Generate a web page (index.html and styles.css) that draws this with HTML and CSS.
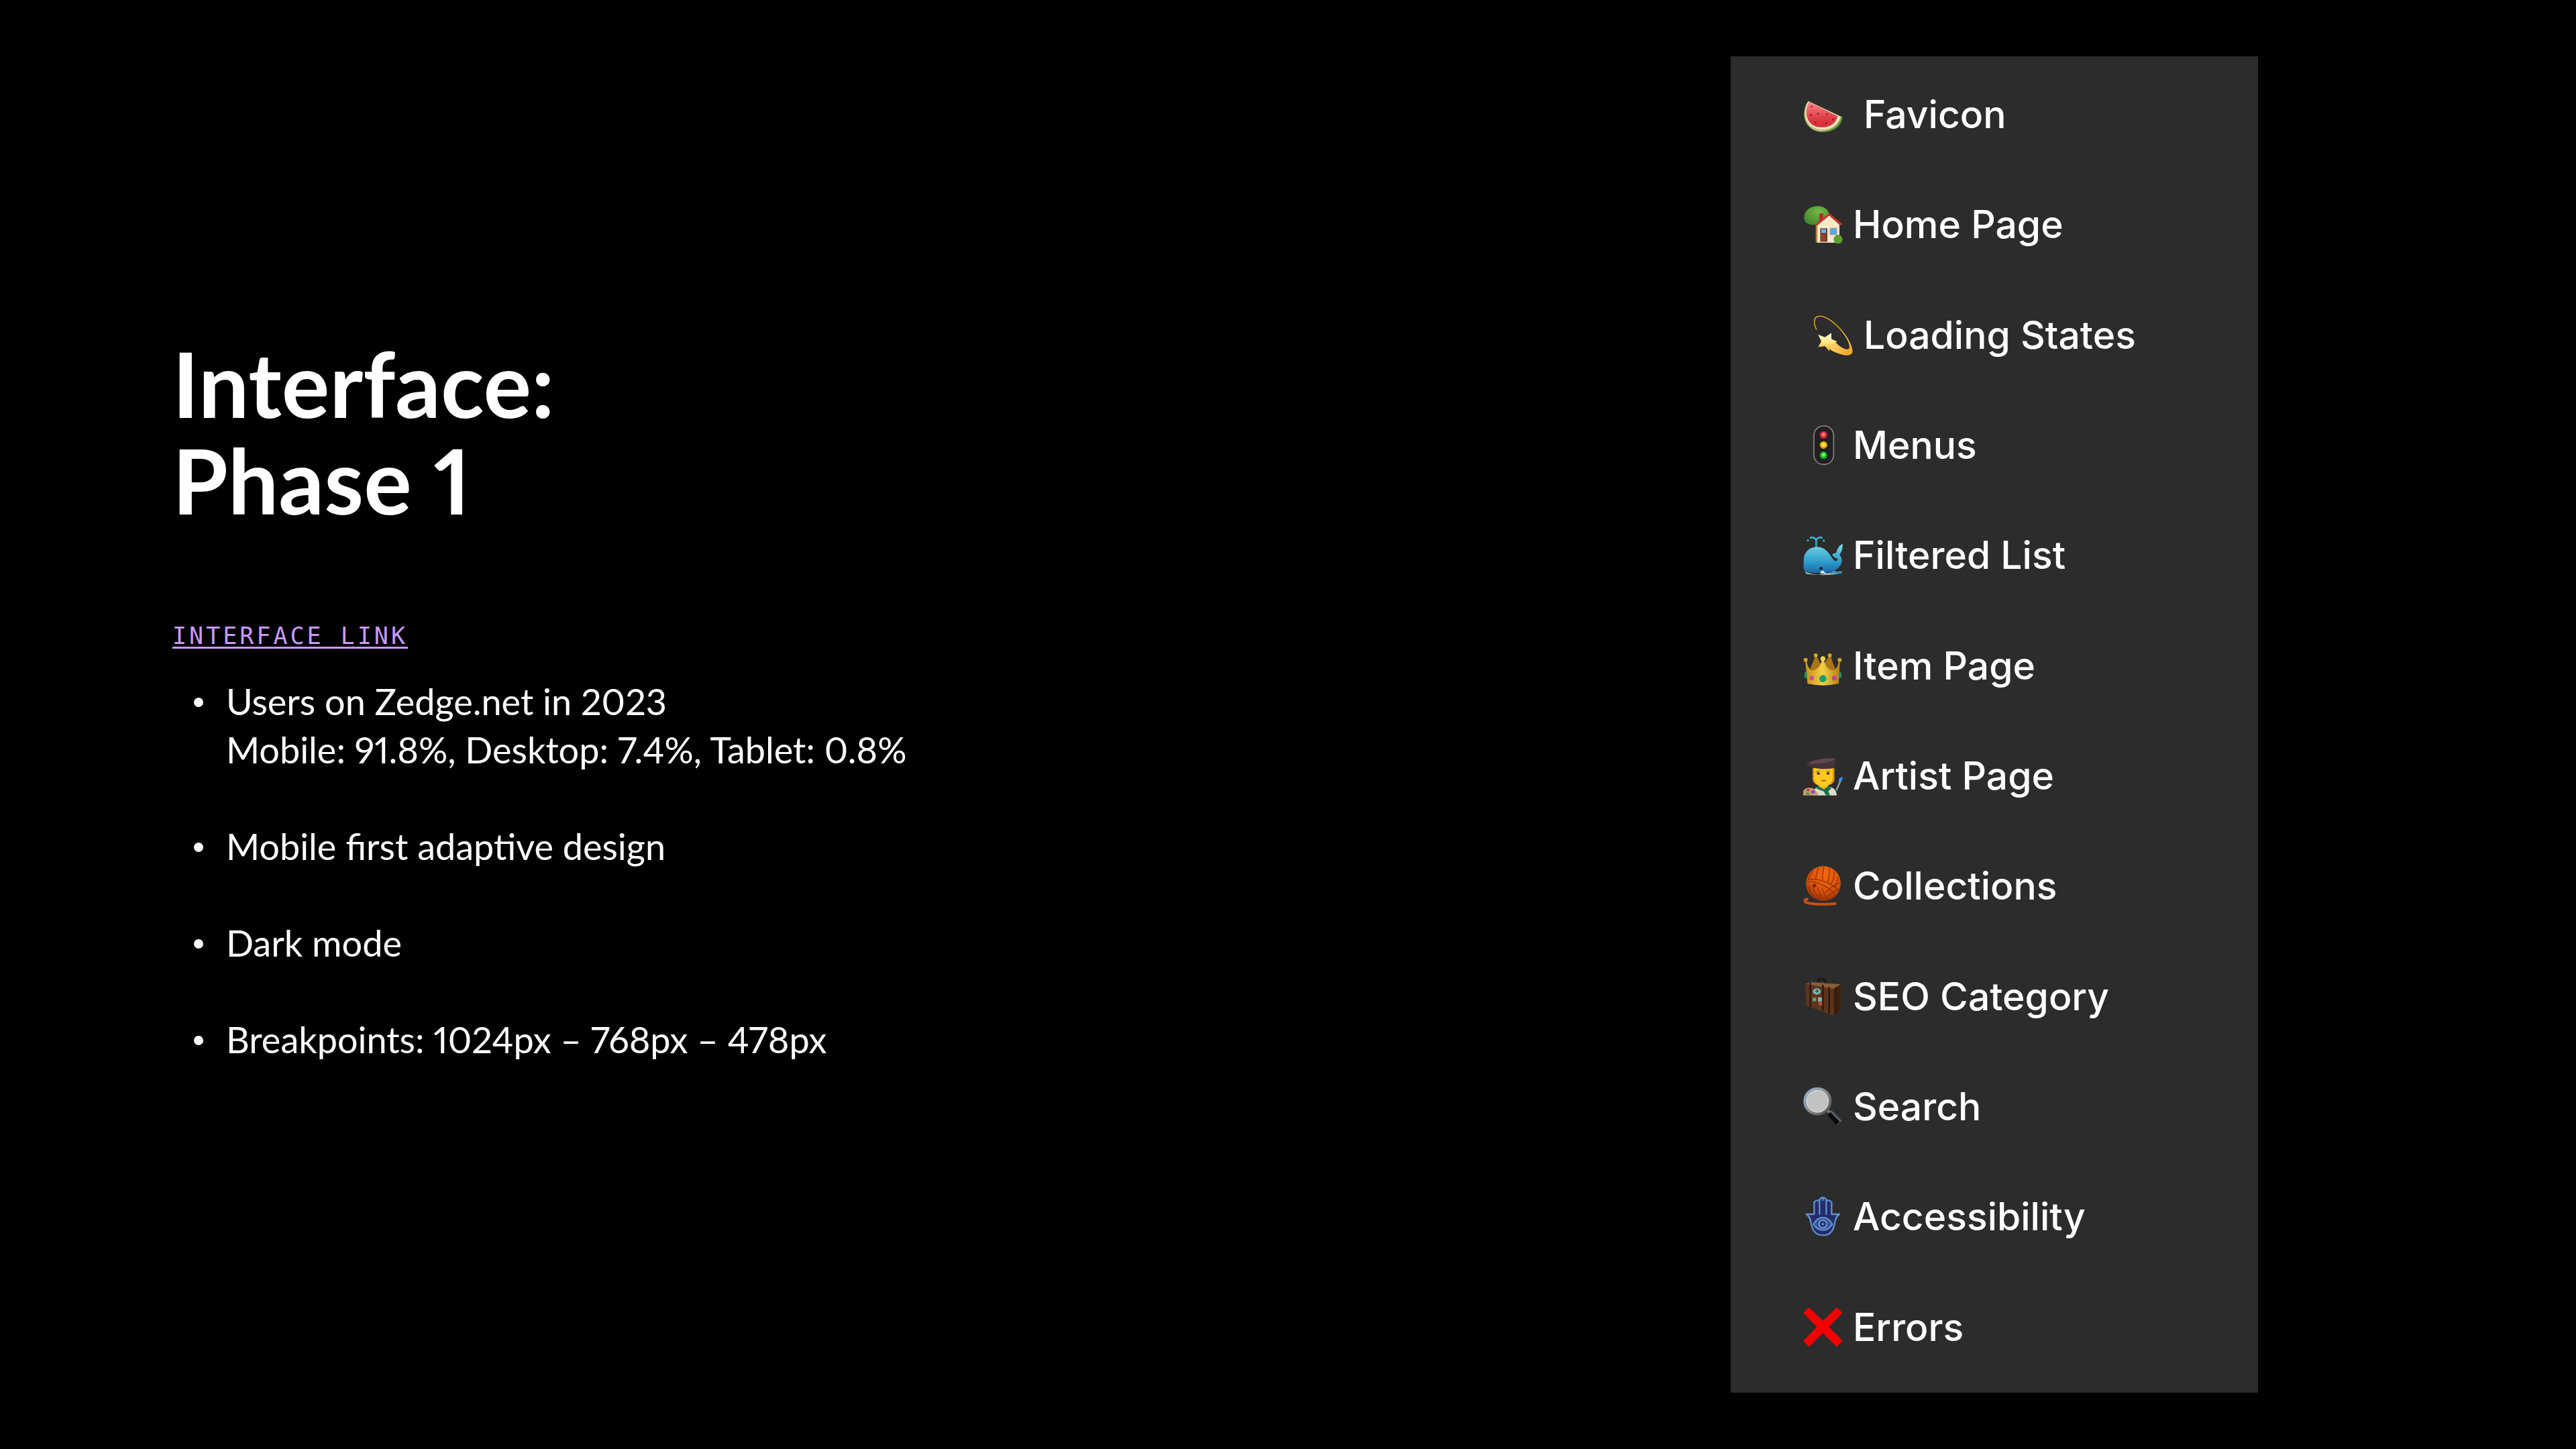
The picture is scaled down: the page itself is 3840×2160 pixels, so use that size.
FILE: index.html
```html
<!DOCTYPE html>
<html lang="en">
<head>
  <meta charset="utf-8">
  <title>Interface: Phase 1</title>
  <link rel="stylesheet" href="styles.css">
</head>
<body>
  <main class="slide">
    <section class="intro">
      <h1 class="title">Interface:<br>Phase 1</h1>
      <a class="link" href="#pages">INTERFACE LINK</a>
      <ul class="facts">
        <li>Users on Zedge.net in 2023<br>Mobile: 91.8%, Desktop: 7.4%, Tablet: 0.8%</li>
        <li>Mobile first adaptive design</li>
        <li>Dark mode</li>
        <li>Breakpoints: 1024px – 768px – 478px</li>
      </ul>
    </section>

    <ul class="pages" id="pages">
      <li class="page page-spaced">
        <svg class="icon" viewBox="0 0 180 180" aria-hidden="true">
          <defs>
            <linearGradient id="melon" x1="0" y1="0" x2="0" y2="1"><stop offset="0" stop-color="#f88a8a"/><stop offset=".6" stop-color="#e2404a"/><stop offset="1" stop-color="#d62c36"/></linearGradient>
          </defs>
          <path d="M22 29C-8 72-4 146 66 165c54 11 106-14 110-67l-10-2z" fill="#5c8f2e"/>
          <path d="M22 29C-8 72-4 146 66 165c50 4 96-22 104-66z" fill="#a9bf78"/>
          <path d="M23 30C-2 74 4 142 66 155c48 8 92-14 100-56z" fill="#f5e3c0"/>
          <path d="M26 32C2 78 14 136 68 145c44 7 78-12 86-48z" fill="url(#melon)"/>
          <g fill="#7c2028"><circle cx="38" cy="54" r="4"/><circle cx="34" cy="92" r="4"/><circle cx="66" cy="86" r="4"/><circle cx="106" cy="89" r="4"/><circle cx="56" cy="125" r="4"/><circle cx="103" cy="127" r="4"/><circle cx="134" cy="112" r="4"/></g>
        </svg>
        <span>Favicon</span>
      </li>
      <li class="page">
        <svg class="icon" viewBox="0 0 180 180" aria-hidden="true">
          <defs>
            <radialGradient id="tree" cx=".6" cy=".3" r=".7"><stop offset="0" stop-color="#74b944"/><stop offset="1" stop-color="#458a2c"/></radialGradient>
          </defs>
          <path d="M4 56C4 26 34 6 66 7c28 1 48 16 52 40L62 86C40 98 2 86 4 56z" fill="url(#tree)"/>
          <path d="M72 40h18v32H72z" fill="#b32a27"/>
          <path d="M56 84h14v86H56z" fill="#b08a4c"/>
          <path d="M116 48l46 42v80H64V92z" fill="#fbe9c8"/>
          <path d="M58 91l58-47 56 46" fill="none" stroke="#cf2f33" stroke-width="9"/>
          <path d="M76 106h32v60H76z" fill="#71382a"/>
          <path d="M81 110h21v17H81z" fill="#62b8e8"/>
          <path d="M78 134h24v28H78z" fill="#8b452e"/>
          <path d="M118 103h34v34h-34z" fill="#c9b08a"/>
          <path d="M121 107h28v27h-28z" fill="#57a8e8"/>
          <circle cx="156" cy="155" r="20" fill="#5c9f30"/>
        </svg>
        <span>Home Page</span>
      </li>
      <li class="page page-indented">
        <svg class="icon" viewBox="0 0 180 180" aria-hidden="true">
          <defs>
            <linearGradient id="star" x1="0" y1="0" x2="0" y2="1"><stop offset="0" stop-color="#fffbe0"/><stop offset=".5" stop-color="#ffe98a"/><stop offset="1" stop-color="#f3ad12"/></linearGradient>
            <linearGradient id="trail" x1="0" y1="0" x2="1" y2="1"><stop offset="0" stop-color="#fff0a0"/><stop offset="1" stop-color="#f0a018"/></linearGradient>
          </defs>
          <path d="M12 64C-2 42-4 6 22 4c36-4 90 44 122 92 14 22 24 48 22 62" fill="none" stroke="#d99f25" stroke-width="5"/>
          <path d="M120 62c30 36 56 78 52 104-4 14-26 16-46 10-32-8-54-20-64-34l30-28c16 22 40 38 58 38 20 0 4-46-30-90z" fill="url(#trail)"/>
          <path d="M78 79v27l26 12-26 12-10 30-18-22-31 4 14-26-14-30 30 12z" fill="url(#star)"/>
        </svg>
        <span>Loading States</span>
      </li>
      <li class="page">
        <svg class="icon" viewBox="0 0 180 180" aria-hidden="true">
          <rect x="48" y="3" width="88" height="172" rx="42" fill="#202020" stroke="#858585" stroke-width="5"/>
          <circle cx="91" cy="43" r="17" fill="#d3263a"/><circle cx="91" cy="41" r="8" fill="#ff7f86"/>
          <circle cx="91" cy="88" r="17" fill="#d99e08"/><circle cx="91" cy="87" r="10" fill="#ffe63a"/>
          <circle cx="91" cy="134" r="17" fill="#13a81f"/><circle cx="91" cy="132" r="9" fill="#6af068"/>
        </svg>
        <span>Menus</span>
      </li>
      <li class="page">
        <svg class="icon" viewBox="0 0 180 180" aria-hidden="true">
          <defs>
            <linearGradient id="whale" x1="0" y1="0" x2="0" y2="1"><stop offset="0" stop-color="#7bd6e4"/><stop offset=".55" stop-color="#34a4d0"/><stop offset="1" stop-color="#1768a8"/></linearGradient>
          </defs>
          <path d="M58 54V24" stroke="#2fa5bd" stroke-width="9"/>
          <path d="M30 12q16-8 28 8 12-16 28-8M18 20l6 6M94 20l-4 8" fill="none" stroke="#36b3c6" stroke-width="8"/>
          <path d="M8 162c40 20 96 16 128-2l38 6c-20 14-120 14-160 6z" fill="#b9ccd6"/>
          <path d="M2 112C2 78 26 52 62 52c40 0 56 34 72 56 10 12 20 8 20-4-10-2-22-8-24-20l18-6c4-20 14-34 28-40 2 20-4 38-14 48 18 22 12 46-8 62-20 18-60 22-100 20-32-2-50-6-50-12-4-12-2-28-2-44z" fill="url(#whale)"/>
          <path d="M76 170c4-16 12-16 20-4l12 6z" fill="#dfe9ee"/>
          <path d="M120 164l56-4-6 12h-50z" fill="#2f91bd"/>
          <circle cx="80" cy="148" r="7" fill="#0b1c33"/>
        </svg>
        <span>Filtered List</span>
      </li>
      <li class="page">
        <svg class="icon" viewBox="0 0 180 180" aria-hidden="true">
          <defs>
            <linearGradient id="gold" x1="0" y1="0" x2="1" y2="0"><stop offset="0" stop-color="#c48e14"/><stop offset=".5" stop-color="#f3cf45"/><stop offset="1" stop-color="#b67d12"/></linearGradient>
          </defs>
          <path d="M20 130L54 46h6l24 44 32-44h6l32 84z" fill="#a9741a"/>
          <path d="M9 64h6c4 26 12 40 24 46 22-2 40-20 46-52h6c6 32 22 50 44 52 14-6 20-20 24-46h6l-6 104q-70 16-140 0z" fill="url(#gold)"/>
          <g fill="#d4a32a"><circle cx="11" cy="62" r="9"/><circle cx="56" cy="42" r="9"/><circle cx="119" cy="42" r="9"/><circle cx="163" cy="62" r="9"/></g>
          <circle cx="88" cy="57" r="11" fill="#f7d84a"/>
          <circle cx="88" cy="146" r="16" fill="#18a070"/>
          <circle cx="38" cy="143" r="10" fill="#d548a4"/><circle cx="139" cy="143" r="10" fill="#c43f96"/>
          <ellipse cx="11" cy="130" rx="6" ry="14" fill="#1c9668"/><ellipse cx="165" cy="130" rx="6" ry="14" fill="#1c9668"/>
        </svg>
        <span>Item Page</span>
      </li>
      <li class="page">
        <svg class="icon" viewBox="0 0 180 180" aria-hidden="true">
          <path d="M42 54h98v54q-4 14-18 20H60q-14-6-18-20z" fill="#d9920c"/>
          <path d="M44 176c0-22 8-34 26-40h42c22 4 36 14 38 40z" fill="#dcdcca"/>
          <path d="M74 120h34v30H74z" fill="#e2a50c"/>
          <path d="M64 132l28 18 26-18 8 12-14 14 8 18h-18l-10-18-32-12z" fill="#1d6b4a"/>
          <path d="M48 52h84v44c0 24-22 42-42 46-20-4-42-22-42-46z" fill="#fdc820"/>
          <path d="M16 34C50 12 106 6 146 9v22c-6 4-4 14-8 22-30 8-70 6-96-2-18-4-26-8-26-17z" fill="#43343a"/>
          <path d="M20 32C54 14 106 10 144 12c-14 16-80 26-124 20z" fill="#5d4a50"/>
          <ellipse cx="68" cy="78" rx="7" ry="6" fill="#4b3a20"/><ellipse cx="111" cy="78" rx="7" ry="6" fill="#4b3a20"/>
          <path d="M56 70l18-4M104 66l18 4" stroke="#a97612" stroke-width="4"/>
          <path d="M82 110h20" stroke="#a86a18" stroke-width="6"/>
          <path d="M0 156c8-16 34-18 50-8l20 28H0z" fill="#c99a6c"/>
          <circle cx="22" cy="152" r="7" fill="#dc3d3d"/><circle cx="44" cy="160" r="8" fill="#8b43c6"/><circle cx="20" cy="168" r="7" fill="#3aa94a"/>
          <path d="M166 112l-18 42" stroke="#8e969c" stroke-width="8"/>
          <path d="M158 114l4-16 14-6-2 20z" fill="#2f8fe8"/>
        </svg>
        <span>Artist Page</span>
      </li>
      <li class="page">
        <svg class="icon" viewBox="0 0 180 180" aria-hidden="true">
          <defs>
            <radialGradient id="yarn" cx=".55" cy=".25" r=".8"><stop offset="0" stop-color="#f26a0c"/><stop offset=".6" stop-color="#d8520a"/><stop offset="1" stop-color="#8a2c06"/></radialGradient>
          </defs>
          <path d="M22 148c-22 0-18 14 2 18 40 8 84 6 124 2" fill="none" stroke="#c9500e" stroke-width="12"/>
          <circle cx="90" cy="78" r="78" fill="url(#yarn)"/>
          <g fill="none" stroke="#96330a" stroke-width="4">
            <path d="M14 72c40-12 104 24 130 56M20 60c50-6 100 14 142 50M44 20c-10 12-16 24-20 38M70 6c-8 16-12 34-14 52M92 2c-4 22-6 42-6 62M116 8c4 22 0 44-6 64M138 24c2 22-4 42-16 60M156 46c0 20-6 36-16 50"/>
            <path d="M24 88c6 24 16 40 30 54M42 84c6 30 18 50 32 68M64 90c4 26 14 44 28 62M84 98c6 22 14 36 26 50M100 118c20-20 40-34 66-44M112 134c16-16 32-26 52-34"/>
          </g>
          <circle cx="50" cy="87" r="8" fill="#7c2606"/>
        </svg>
        <span>Collections</span>
      </li>
      <li class="page">
        <svg class="icon" viewBox="0 0 180 180" aria-hidden="true">
          <path d="M66 28V16q14-14 34 0v14" fill="none" stroke="#1b1816" stroke-width="9"/>
          <path d="M10 32l128 20v124L12 128z" fill="#5c351f"/>
          <path d="M136 52l32-18v110l-32 32z" fill="#41220f"/>
          <path d="M10 32l26-8 132 10-32 20z" fill="#8a5c38"/>
          <path d="M32 26v110M88 36v118M116 46v120" stroke="#2c170c" stroke-width="7"/>
          <path d="M148 46v116" stroke="#2c170c" stroke-width="5"/>
          <ellipse cx="61" cy="66" rx="18" ry="14" fill="#78b7a9"/><circle cx="62" cy="64" r="7" fill="#2c6270"/>
          <path d="M42 94h16v16H42z" fill="#63a277"/><path d="M66 92h18v20H66z" fill="#8fa7ad"/><path d="M68 114h17v14H68z" fill="#b94c3c"/>
        </svg>
        <span>SEO Category</span>
      </li>
      <li class="page">
        <svg class="icon" viewBox="0 0 180 180" aria-hidden="true">
          <defs>
            <linearGradient id="rim" x1="0" y1="0" x2="1" y2="1"><stop offset="0" stop-color="#93b2d4"/><stop offset=".5" stop-color="#8b8d90"/><stop offset="1" stop-color="#4a4744"/></linearGradient>
          </defs>
          <path d="M104 102l18 16" stroke="#77797b" stroke-width="12"/>
          <path d="M116 116l46 46" stroke="#5b6167" stroke-width="30"/>
          <path d="M114 120l42 44" stroke="#08090a" stroke-width="20"/>
          <circle cx="64" cy="65" r="57" fill="#c2c2c2" stroke="url(#rim)" stroke-width="12"/>
          <circle cx="64" cy="65" r="48" fill="none" stroke="#d8d8d8" stroke-width="3"/>
        </svg>
        <span>Search</span>
      </li>
      <li class="page">
        <svg class="icon" viewBox="0 0 180 180" aria-hidden="true">
          <path d="M49 78V24q10-12 24-6V12q15-18 30 0v6q14-6 24 6v54l35 0c-14 8-18 22-22 44-6 34-26 50-52 50s-46-16-52-50c-4-22-8-36-22-44z" fill="#242c6c" stroke="#5f8fc8" stroke-width="7" stroke-linejoin="round"/>
          <path d="M73 18v62M103 18v62M88 2v16" stroke="#5f8fc8" stroke-width="7"/>
          <path d="M46 123c22-40 62-40 84 0-22 34-62 34-84 0z" fill="#35549a" stroke="#5f8fc8" stroke-width="7"/>
          <circle cx="88" cy="122" r="17" fill="#27336f" stroke="#6a9bd2" stroke-width="6"/>
          <circle cx="88" cy="122" r="5" fill="#6a9bd2"/>
        </svg>
        <span>Accessibility</span>
      </li>
      <li class="page">
        <svg class="icon" viewBox="0 0 180 180" aria-hidden="true">
          <path d="M26 0l62 60L150 0l26 24-61 63 61 62-26 27-62-61-62 61L0 149l61-62L0 24z" fill="#f50000"/>
        </svg>
        <span>Errors</span>
      </li>
    </ul>
  </main>
</body>
</html>
```
FILE: styles.css
```css
* {
  box-sizing: border-box;
}

body {
  margin: 0;
  background: #000;
  color: #fff;
}

ul {
  margin: 0;
  padding: 0;
  list-style: none;
}

.slide {
  display: grid;
  grid-template-columns: 1fr 786px;
  min-height: 100vh;
  padding: 84px 474px 84px 257px;
}

.intro {
  display: flex;
  flex-direction: column;
  align-items: flex-start;
  justify-content: center;
  padding-bottom: 74px;
  font-family: "Lato", sans-serif;
  font-variant-numeric: proportional-nums;
}

.title {
  margin: 0 0 136px;
  font-size: 134px;
  font-weight: 700;
  line-height: 144px;
}

.link {
  margin-bottom: 38px;
  color: #c79bff;
  font-family: "DejaVu Sans Mono", monospace;
  font-size: 35px;
  line-height: 48px;
  letter-spacing: 4px;
  text-decoration: underline;
  text-decoration-thickness: 3px;
  text-underline-offset: 4px;
}

.facts {
  display: flex;
  flex-direction: column;
  gap: 72px;
  font-size: 54px;
  line-height: 72px;
}

.facts li {
  display: flex;
  gap: 34px;
  padding-left: 32px;
}

.facts li::before {
  content: "";
  flex: none;
  width: 14px;
  height: 14px;
  margin-top: 30px;
  border-radius: 50%;
  background: #fff;
}

.pages {
  display: grid;
  grid-auto-rows: 1fr;
  padding: 5px 0 15px 108px;
  background: #2c2c2c;
  font-family: "Inter", sans-serif;
  font-size: 57px;
  font-weight: 500;
  line-height: 72px;
}

.page {
  display: flex;
  align-items: center;
  gap: 14px;
}

.page-spaced {
  gap: 30px;
}

.page-indented {
  padding-left: 16px;
}

.icon {
  flex: none;
  width: 60px;
  height: 60px;
}
```
